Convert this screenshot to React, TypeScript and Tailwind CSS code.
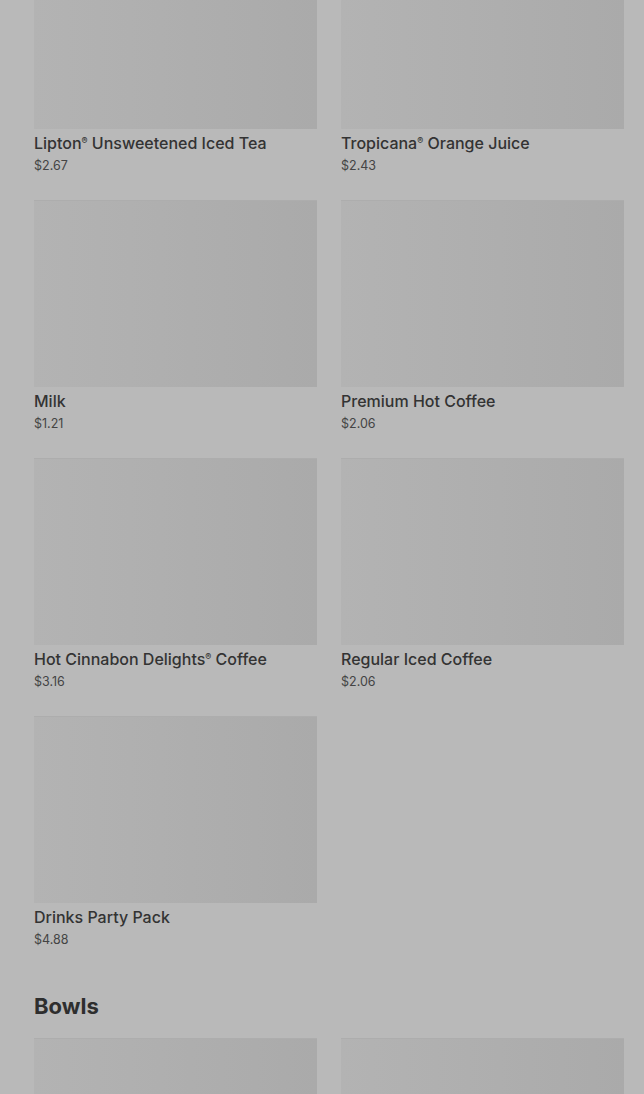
import React from "react";

const drinks = [
  { name: "Lipton® Unsweetened Iced Tea", price: "$2.67" },
  { name: "Tropicana® Orange Juice", price: "$2.43" },
  { name: "Milk", price: "$1.21" },
  { name: "Premium Hot Coffee", price: "$2.06" },
  { name: "Hot Cinnabon Delights® Coffee", price: "$3.16" },
  { name: "Regular Iced Coffee", price: "$2.06" },
  { name: "Drinks Party Pack", price: "$4.88" },
];

const ItemCard = ({ name, price }: { name?: string; price?: string }) => (
  <div className="flex flex-col">
    <div className="h-[187px] w-full bg-gradient-to-r from-[#b3b3b3] to-[#aaaaaa] border-t border-[#adadad]" />
    {name && (
      <>
        <div className="mt-[2px] text-[16px] leading-6 font-medium text-[#333333] whitespace-nowrap">
          {name.split("®").map((part, i, arr) => (
            <React.Fragment key={i}>
              {part}
              {i < arr.length - 1 && <sup className="text-[9px] top-[-0.6em]">®</sup>}
            </React.Fragment>
          ))}
        </div>
        <div className="mt-[1px] text-[12.5px] leading-5 text-[#444444]">{price}</div>
      </>
    )}
  </div>
);

export default function App() {
  return (
    <div
      className="min-h-[1094px] w-full overflow-hidden bg-[#b9b9b9]"
      style={{ fontFamily: "Inter, 'Noto Sans', Arial, sans-serif" }}
    >
      <div className="mt-[-58px] pl-[34px] pr-[20px]">
        <div className="grid grid-cols-2 gap-x-6 gap-y-6">
          {drinks.map((d) => (
            <ItemCard key={d.name} name={d.name} price={d.price} />
          ))}
        </div>
        <h2 className="mt-10 text-[22px] leading-8 font-bold text-[#2e2e2e]">Bowls</h2>
        <div className="mt-4 grid grid-cols-2 gap-x-6">
          <ItemCard />
          <ItemCard />
        </div>
      </div>
    </div>
  );
}
